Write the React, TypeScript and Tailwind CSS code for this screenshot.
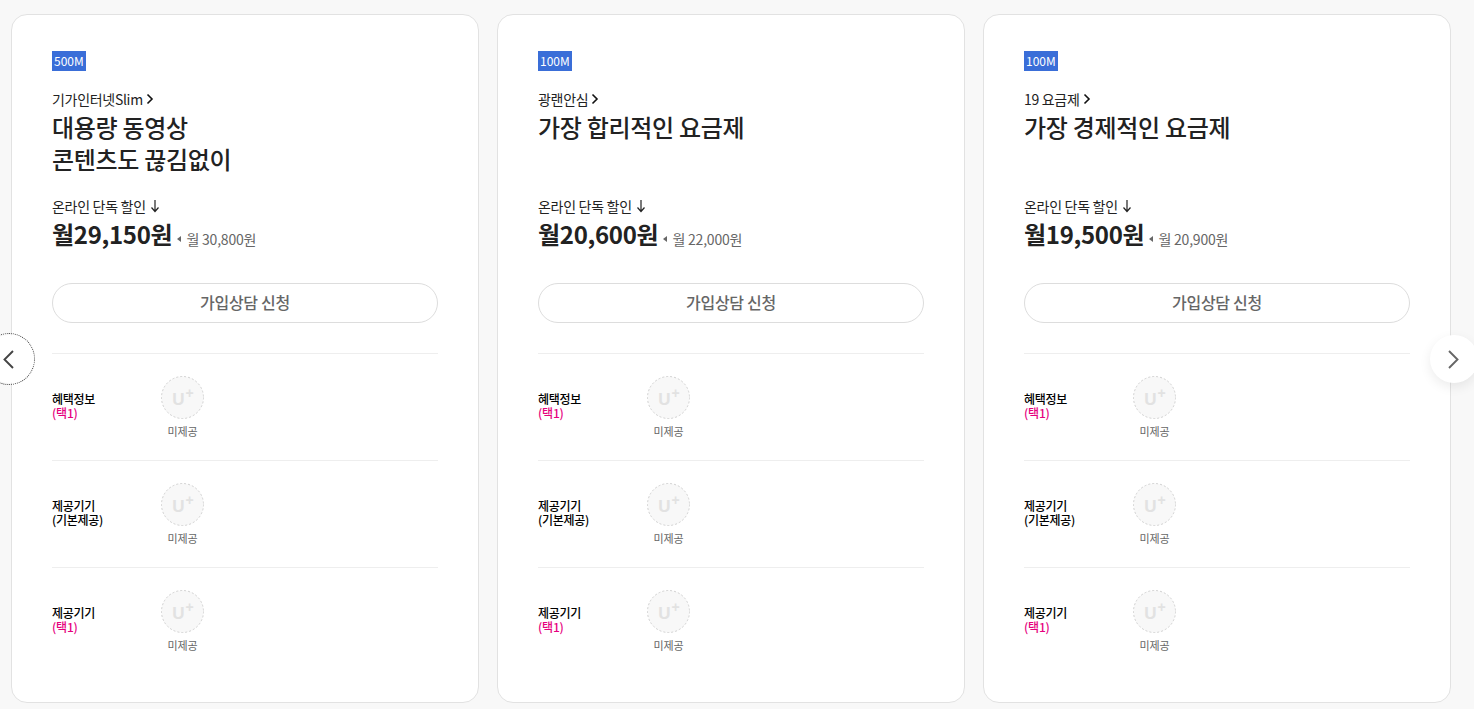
import React from 'react';

const plans = [
  { speed: '500M', name: '기가인터넷Slim', title: ['대용량 동영상', '콘텐츠도 끊김없이'], price: '월29,150원', original: '월 30,800원' },
  { speed: '100M', name: '광랜안심', title: ['가장 합리적인 요금제'], price: '월20,600원', original: '월 22,000원' },
  { speed: '100M', name: '19 요금제', title: ['가장 경제적인 요금제'], price: '월19,500원', original: '월 20,900원' },
];

const rows = [
  { label: '혜택정보', sub: '(택1)', pink: true },
  { label: '제공기기', sub: '(기본제공)', pink: false },
  { label: '제공기기', sub: '(택1)', pink: true },
];

function Row({ label, sub, pink }: { label: string; sub: string; pink: boolean }) {
  return (
    <div className="flex h-[107px] border-t border-[#eeeeee]">
      <div className="w-[109px] pt-[38px] text-[12px] leading-[14px] font-medium tracking-[-0.3px] text-black">
        <p>{label}</p>
        <p className={pink ? 'tracking-[-0.2px] text-[#e6007e]' : ''}>{sub}</p>
      </div>
      <div className="flex w-[43px] flex-col items-center pt-[22px]">
        <div className="relative h-[43px] w-[43px] shrink-0">
          <svg width="43" height="43" viewBox="0 0 43 43">
            <circle cx="21.5" cy="21.5" r="21" fill="#f8f8f8" stroke="#d0d0d0" strokeWidth="1" strokeDasharray="2 2" />
          </svg>
          <span className="absolute inset-0 flex items-center justify-center pl-[1px] font-['Liberation_Sans'] font-bold text-[#e2e2e2]">
            <span className="mt-[3px] text-[17px] leading-[17px]">U</span>
            <span className="-mt-[10px] ml-[1px] text-[14px] leading-[14px]">+</span>
          </span>
        </div>
        <p className="mt-[4px] text-[11px] leading-[16px] tracking-[-0.2px] whitespace-nowrap text-[#666666]">미제공</p>
      </div>
    </div>
  );
}

function Card({ plan }: { plan: (typeof plans)[number] }) {
  return (
    <div className="h-[689px] w-[468px] shrink-0 rounded-[16px] border border-[#e2e2e2] bg-white px-[40px] pt-[36px]">
      <span className="block h-[20px] w-fit bg-[#3a6ed8] px-[2px] text-[12px] leading-[19px] text-white">{plan.speed}</span>
      <div className="mt-[18px] flex h-[20px] items-center text-[14px] tracking-[-0.3px] text-[#222222]">
        {plan.name}
        <svg className="ml-[3px]" width="8" height="12" viewBox="0 0 8 12" fill="none" stroke="#111111" strokeWidth="1.6">
          <path d="M1.5 1.5 6 6l-4.5 4.5" />
        </svg>
      </div>
      <div className="h-[74px] pt-[2px] text-[24px] leading-[32px] font-medium tracking-[-0.3px] text-[#222222]">
        {plan.title.map((line) => (
          <p key={line}>{line}</p>
        ))}
      </div>
      <div className="mt-[13px] flex h-[20px] items-center text-[14px] tracking-[-0.3px] text-[#222222]">
        온라인 단독 할인
        <svg className="ml-[4px]" width="10" height="14" viewBox="0 0 10 14" fill="none" stroke="#222222" strokeWidth="1.2">
          <path d="M5 1v11M1.5 8.5 5 12.5l3.5-4" />
        </svg>
      </div>
      <div className="mt-[1px] flex h-[34px] items-center">
        <span className="text-[24px] font-bold tracking-[-0.3px] text-[#222222]">{plan.price}</span>
        <span className="mt-[10px] ml-[5px] flex items-center text-[14px] tracking-[-0.2px] text-[#666666]">
          <span className="mr-[5px] h-0 w-0 border-y-[3px] border-r-[4px] border-y-transparent border-r-[#666666]" />
          {plan.original}
        </span>
      </div>
      <button className="mt-[32px] block h-[40px] w-full rounded-full border border-[#dddddd] bg-white pb-[2px] text-[16px] font-medium tracking-[-0.3px] text-[#666666]">
        가입상담 신청
      </button>
      <div className="mt-[30px]">
        {rows.map((row, i) => (
          <Row key={i} {...row} />
        ))}
      </div>
    </div>
  );
}

export default function App() {
  return (
    <div className="relative flex h-[709px] gap-[18px] overflow-hidden bg-[#f8f8f8] pt-[14px] pl-[11px] font-['Noto_Sans_CJK_KR','Noto_Sans',sans-serif]">
      {plans.map((plan) => (
        <Card key={plan.name} plan={plan} />
      ))}
      <button className="absolute top-[335px] -left-[15px] flex h-[48px] w-[48px] items-center justify-end rounded-full bg-white pr-[19px] outline-1 outline-offset-1 outline-[#444444] outline-dotted">
        <svg width="11" height="19" viewBox="0 0 11 19" fill="none" stroke="#444444" strokeWidth="1.9">
          <path d="M10 1 1.5 9.5 10 18" />
        </svg>
      </button>
      <button className="absolute top-[335px] left-[1430px] flex h-[48px] w-[48px] items-center rounded-full bg-white pl-[18px] shadow-[0_4px_12px_rgba(0,0,0,0.08)]">
        <svg width="11" height="19" viewBox="0 0 11 19" fill="none" stroke="#666666" strokeWidth="1.9">
          <path d="m1 1 8.5 8.5L1 18" />
        </svg>
      </button>
    </div>
  );
}
